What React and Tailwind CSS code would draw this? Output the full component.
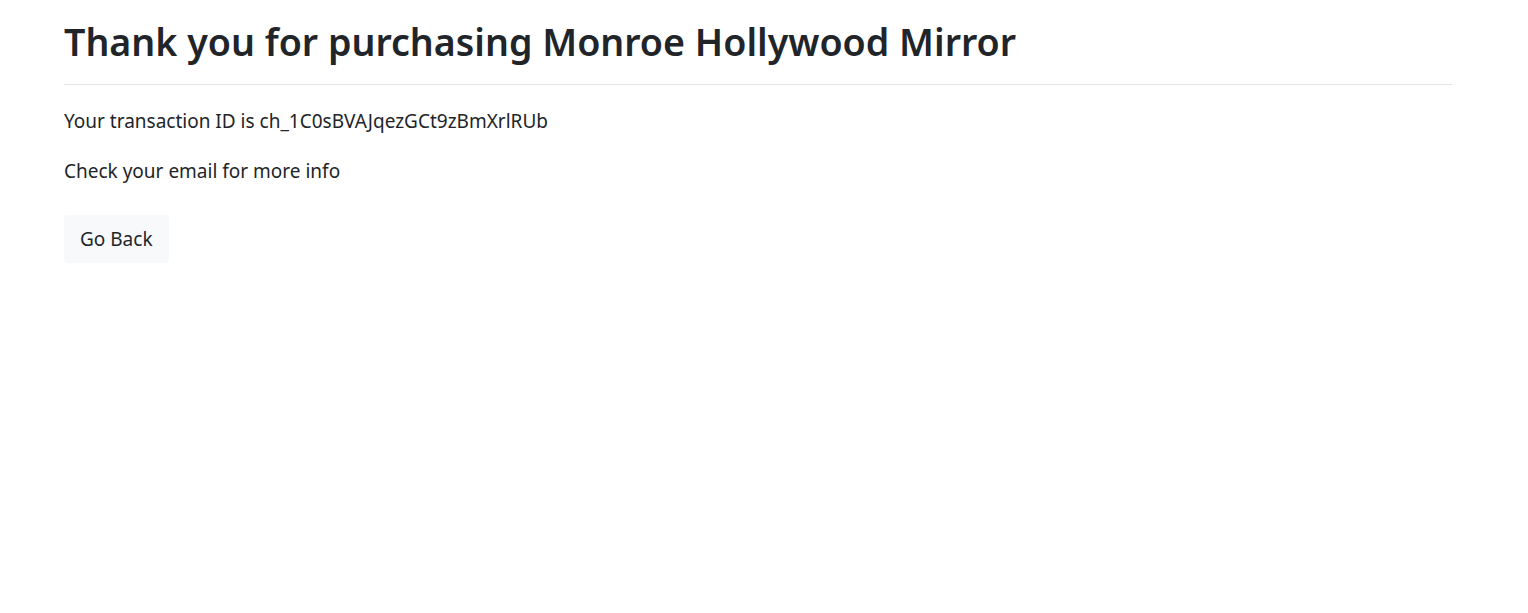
export default function App() {
  return (
    <div className="min-h-screen bg-white text-[#212529] [font-family:'Segoe_UI','Noto_Sans',sans-serif]">
      <div className="ml-16 w-[1388px] pt-[18px]">
        <h1 className="text-[37.6px] font-semibold leading-[48px]">
          Thank you for purchasing Monroe Hollywood Mirror
        </h1>
        <hr className="mt-[18px] mb-[22px] border-t border-[#e5e5e5]" />
        <p className="text-[19px] leading-[28px]">
          Your transaction ID is ch_1C0sBVAJqezGCt9zBmXrlRUb
        </p>
        <p className="mt-[22px] text-[19px] leading-[28px]">Check your email for more info</p>
        <button className="mt-[30px] rounded-[4px] bg-[#f8f9fa] px-4 py-[9px] text-[19px] leading-[30px]">
          Go Back
        </button>
      </div>
    </div>
  );
}
